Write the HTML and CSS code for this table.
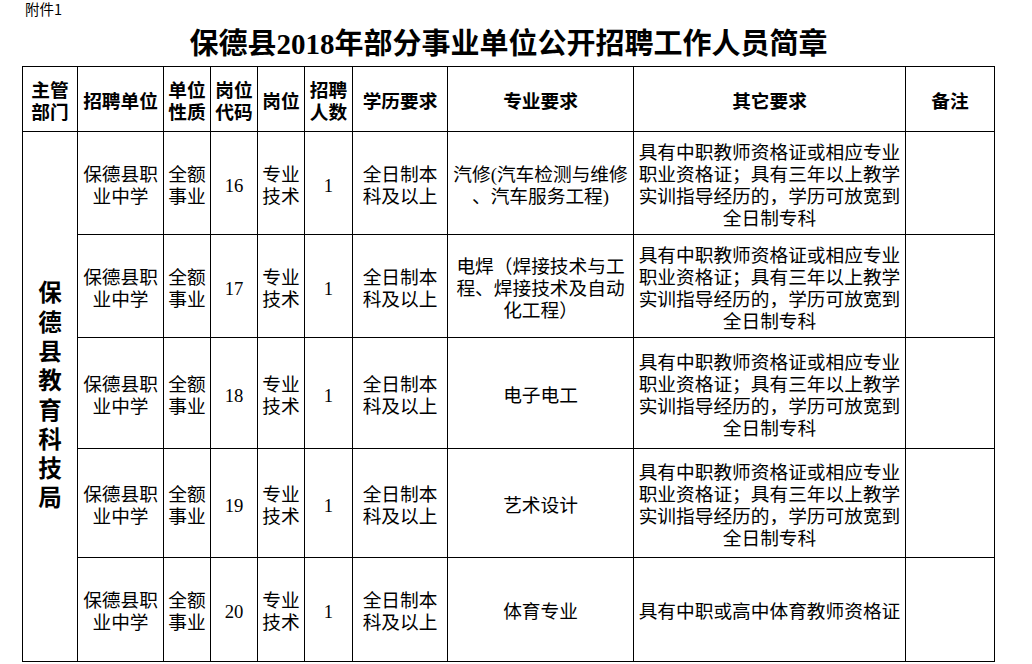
FILE: index.html
```html
<!DOCTYPE html>
<html lang="zh-CN">
<head>
<meta charset="utf-8">
<title>保德县2018年部分事业单位公开招聘工作人员简章</title>
<link rel="stylesheet" href="styles.css">
</head>
<body>
<div class="page">
  <div class="note">附件1</div>
  <h1 class="title">保德县2018年部分事业单位公开招聘工作人员简章</h1>
  <table class="jobs">
    <colgroup>
      <col class="c-dept"><col class="c-unit"><col class="c-kind"><col class="c-code"><col class="c-post"><col class="c-num"><col class="c-edu"><col class="c-major"><col class="c-other"><col class="c-memo">
    </colgroup>
    <thead>
      <tr class="row-head">
        <th>主管<br>部门</th>
        <th>招聘单位</th>
        <th>单位<br>性质</th>
        <th>岗位<br>代码</th>
        <th>岗位</th>
        <th>招聘<br>人数</th>
        <th>学历要求</th>
        <th>专业要求</th>
        <th>其它要求</th>
        <th>备注</th>
      </tr>
    </thead>
    <tbody>
      <tr class="row-a">
        <td rowspan="5" class="dept"><span class="vtext">保德县教育科技局</span></td>
        <td>保德县职<br>业中学</td>
        <td>全额<br>事业</td>
        <td class="num">16</td>
        <td>专业<br>技术</td>
        <td class="num">1</td>
        <td>全日制本<br>科及以上</td>
        <td>汽修(汽车检测与维修<br>、汽车服务工程)</td>
        <td>具有中职教师资格证或相应专业<br>职业资格证；具有三年以上教学<br>实训指导经历的，学历可放宽到<br>全日制专科</td>
        <td></td>
      </tr>
      <tr class="row-b">
        <td>保德县职<br>业中学</td>
        <td>全额<br>事业</td>
        <td class="num">17</td>
        <td>专业<br>技术</td>
        <td class="num">1</td>
        <td>全日制本<br>科及以上</td>
        <td>电焊（焊接技术与工<br>程、焊接技术及自动<br>化工程）</td>
        <td>具有中职教师资格证或相应专业<br>职业资格证；具有三年以上教学<br>实训指导经历的，学历可放宽到<br>全日制专科</td>
        <td></td>
      </tr>
      <tr class="row-c">
        <td>保德县职<br>业中学</td>
        <td>全额<br>事业</td>
        <td class="num">18</td>
        <td>专业<br>技术</td>
        <td class="num">1</td>
        <td>全日制本<br>科及以上</td>
        <td>电子电工</td>
        <td>具有中职教师资格证或相应专业<br>职业资格证；具有三年以上教学<br>实训指导经历的，学历可放宽到<br>全日制专科</td>
        <td></td>
      </tr>
      <tr class="row-d">
        <td>保德县职<br>业中学</td>
        <td>全额<br>事业</td>
        <td class="num">19</td>
        <td>专业<br>技术</td>
        <td class="num">1</td>
        <td>全日制本<br>科及以上</td>
        <td>艺术设计</td>
        <td>具有中职教师资格证或相应专业<br>职业资格证；具有三年以上教学<br>实训指导经历的，学历可放宽到<br>全日制专科</td>
        <td></td>
      </tr>
      <tr class="row-e">
        <td>保德县职<br>业中学</td>
        <td>全额<br>事业</td>
        <td class="num">20</td>
        <td>专业<br>技术</td>
        <td class="num">1</td>
        <td>全日制本<br>科及以上</td>
        <td>体育专业</td>
        <td>具有中职或高中体育教师资格证</td>
        <td></td>
      </tr>
    </tbody>
  </table>
</div>
</body>
</html>
```

FILE: styles.css
```css
html, body {
  margin: 0;
  padding: 0;
  background: #ffffff;
  color: #000000;
}

.page {
  padding-left: 22px;
  font-family: "Liberation Serif", "Noto Sans CJK SC", serif;
}

.note {
  font-family: "Noto Sans CJK SC", sans-serif;
  font-size: 14.5px;
  line-height: 18px;
  padding-left: 3px;
  height: 18px;
}

.title {
  width: 973px;
  margin: 6px 0 2px 0;
  font-family: "Liberation Serif", "Noto Sans CJK SC", serif;
  font-size: 29px;
  line-height: 40px;
  font-weight: 700;
  text-align: center;
}

.jobs {
  border-collapse: collapse;
  table-layout: fixed;
  width: 973px;
  font-size: 18.7px;
  line-height: 22px;
}

.jobs th,
.jobs td {
  border: 1px solid #000000;
  padding: 5px 0 0 0;
  text-align: center;
  vertical-align: middle;
  white-space: nowrap;
  overflow: hidden;
}

.jobs th {
  font-weight: 700;
}

.c-dept { width: 55px; }
.c-unit { width: 86px; }
.c-kind { width: 47px; }
.c-code { width: 47px; }
.c-post { width: 47px; }
.c-num { width: 48px; }
.c-edu { width: 95px; }
.c-major { width: 186px; }
.c-other { width: 272px; }
.c-memo { width: 89px; }

.row-head { height: 65px; }
.row-a { height: 103px; }
.row-b { height: 103px; }
.row-c { height: 111px; }
.row-d { height: 109px; }
.row-e { height: 104px; }

.num {
  font-family: "Liberation Serif", serif;
}

.jobs td.dept {
  padding-top: 0;
}

.dept .vtext {
  display: block;
  width: 24px;
  margin: 0 auto;
  font-size: 23.5px;
  line-height: 29.3px;
  font-weight: 700;
  white-space: normal;
  word-break: break-all;
}
```
